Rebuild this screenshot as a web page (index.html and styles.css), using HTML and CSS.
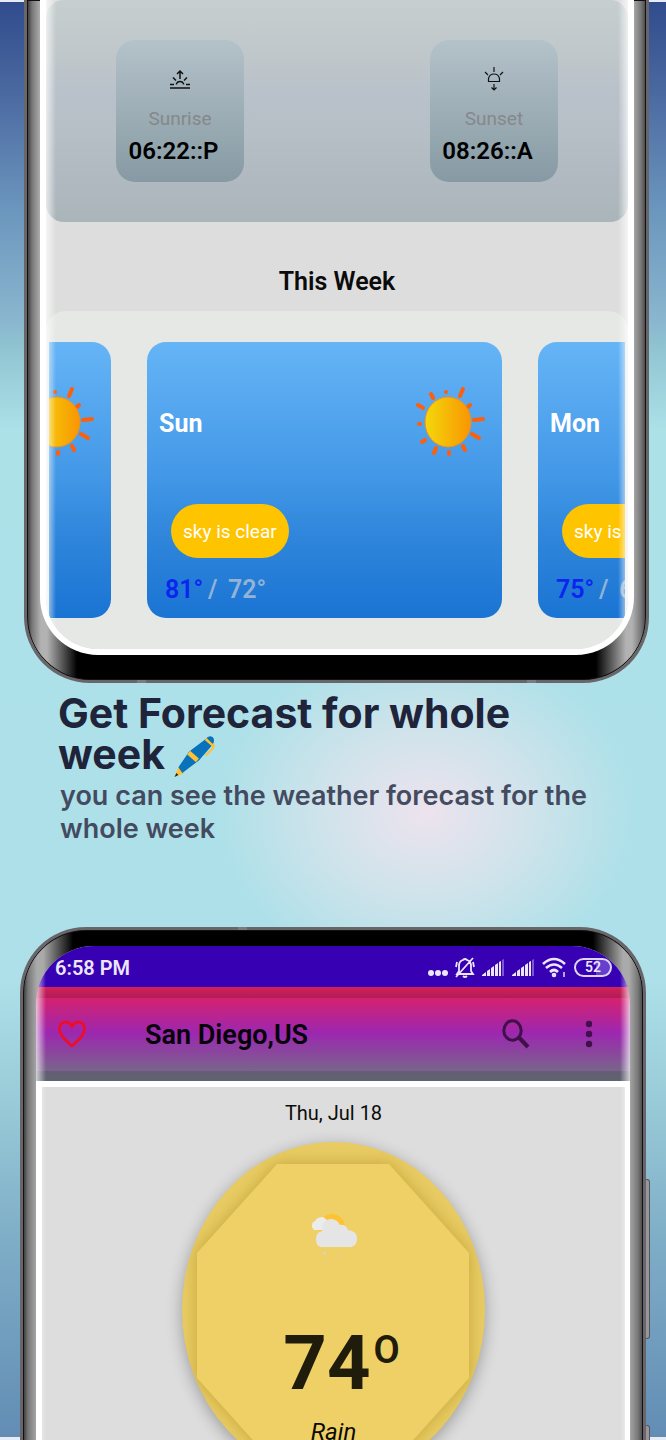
FILE: index.html
```
<!DOCTYPE html>
<html lang="en">
<head>
<meta charset="utf-8">
<meta name="viewport" content="width=device-width, initial-scale=1">
<title>Weather forecast</title>
<link rel="stylesheet" href="styles.css">
</head>
<body>
<svg class="defs" width="0" height="0" aria-hidden="true">
  <defs>
    <linearGradient id="sun-fill" x1="0" x2="1" y1="0" y2="0"><stop offset="0" stop-color="#f4d80a"/><stop offset="1" stop-color="#f99503"/></linearGradient>
    <symbol id="sun" viewBox="0 0 70 70">
      <g stroke="#ff5f0a" stroke-width="4" stroke-linecap="round">
        <path d="M44 9l3-7M52 20l2-2M58 33l9-1M56 47l7 4M47 59l2 4M33 65v2M20 61l-2 5M9 53l-3 2M3 37h1M7 21l-5-3M17 11l-2-4M30 5v0"/>
      </g>
      <ellipse cx="32" cy="35" rx="23" ry="25" fill="url(#sun-fill)" stroke="#ee9220" stroke-width="1"/>
    </symbol>
    <symbol id="signal" viewBox="0 0 23 19">
      <path d="M0 18v-1l4-3v4zM5 18v-5l3-2v7zM9 18v-8l3-2v10zM13 18V7l3-2v13zM17 4l2-1v15h-2z" fill="#ece6fa"/>
      <path d="M20 2l2-1v17h-2z" fill="#7a58d4"/>
    </symbol>
  </defs>
</svg>
<main class="showcase">
  <section class="phone phone-upper" aria-label="Weekly forecast screen">
    <i class="seam seam-left"></i><i class="seam seam-right"></i>
    <div class="screen screen-upper">
      <div class="astro">
        <div class="astro-card">
          <svg class="icon-astro" viewBox="0 0 24 24" fill="none" stroke="#111" stroke-width="1.500"><path d="M2 21h20M2 17.500h4M18 17.500h4M5 10.500l3 3M19 10.500l-3 3M12 12V4M9 7l3-3 3 3M8.500 17.500v-1q1-2 3.500-2t3.500 2v1"/></svg>
          <span class="astro-label">Sunrise</span>
          <span class="astro-time">06:22::P</span>
        </div>
        <div class="astro-card">
          <svg class="icon-astro" viewBox="0 0 24 24" fill="none" stroke="#111" stroke-width="1.200"><path d="M12 0v5M3 5l3 3M21 5l-3 3M6.500 14.500v-3q1-4.500 5.500-4.500t5.500 4.500v3zM12 17v6M9.500 20.500L12 23l2.500-2.500"/></svg>
          <span class="astro-label">Sunset</span>
          <span class="astro-time">08:26::A</span>
        </div>
      </div>
      <h2 class="week-title">This Week</h2>
      <div class="week">
        <div class="track">
          <article class="day">
            <div class="day-head"><span></span><svg class="sun"><use href="#sun"/></svg></div>
          </article>
          <article class="day">
            <div class="day-head"><h3>Sun</h3><svg class="sun"><use href="#sun"/></svg></div>
            <span class="chip">sky is clear</span>
            <p class="temps"><b>81°</b> <span>/</span> <span>72°</span></p>
          </article>
          <article class="day">
            <div class="day-head"><h3>Mon</h3></div>
            <span class="chip">sky is clear</span>
            <p class="temps"><b>75°</b> <span>/</span> <span>6</span></p>
          </article>
        </div>
      </div>
    </div>
  </section>

  <header class="caption">
    <h1>Get Forecast for whole week<svg class="pen" viewBox="0 0 42 42"><path d="M0 42l4-10 6 6z" fill="#fdc133"/><path d="M0 42l2-4 2 2z" fill="#222"/><path d="M4 32L15 16 32 3q3-4 7-2 3 3 0 8L25 25 8 38z" fill="#0872ba"/><path d="M16 15l-3 4 9 8 3-4zM33 2l8 8-1 2-9-8z" fill="#fdc133"/><path d="M39 8q2 2 0 5l-7 7" fill="none" stroke="#fdc133" stroke-width="2"/></svg></h1>
    <p>you can see the weather forecast for the whole week</p>
  </header>

  <section class="phone phone-lower" aria-label="Current weather screen">
    <i class="seam seam-top"></i><i class="key key-power"></i><i class="key key-volume"></i>
    <div class="screen screen-lower">
      <div class="status">
        <span>6:58 PM</span>
        <div class="status-icons">
          <svg width="20" height="20" viewBox="0 0 20 20" fill="#ece6fa"><circle cx="3" cy="15" r="3"/><circle cx="10" cy="15" r="3"/><circle cx="17" cy="15" r="3"/></svg>
          <svg width="20" height="21" viewBox="0 0 20 21" fill="none" stroke="#ece6fa" stroke-width="1.800"><path d="M2 17h16l-2-3V9q0-5-4-6-2-2-4 0-4 1-4 6v5zM8 19q2 2 4 0M1 20L18 1M2 5L1 10M18 5l1 5"/></svg>
          <svg width="23" height="19"><use href="#signal"/></svg>
          <svg width="23" height="19"><use href="#signal"/></svg>
          <svg width="25" height="21" viewBox="0 0 25 21" fill="none" stroke="#ece6fa" stroke-width="2.600"><path d="M1 7q11-10 22 0M4 11q8-7 16 0M8 15q4-4 8 0"/><circle cx="12" cy="18" r="1"/><path d="M22 15v5" stroke="#b6a2ea" stroke-width="2"/></svg>
          <span class="battery">52</span>
        </div>
      </div>
      <div class="appbar">
        <button class="tool" type="button" aria-label="Favourite"><svg width="28" height="28" viewBox="0 0 28 28" fill="none" stroke="#f00d24" stroke-width="2.600"><path d="M14 26C8 20 1.500 16 1.500 8.500 1.500 1 11 0 14 6.500 17 0 26.500 1 26.500 8.500 26.500 16 20 20 14 26z"/></svg></button>
        <h2>San Diego,US</h2>
        <button class="tool" type="button" aria-label="Search"><svg width="28" height="30" viewBox="0 0 28 30" fill="none" stroke="#40104a" stroke-width="3"><ellipse cx="10.500" cy="11.500" rx="8.700" ry="9.700"/><path d="M17 18.500l9 9.500" stroke-width="4"/></svg></button>
        <button class="tool" type="button" aria-label="More options"><svg width="8" height="28" viewBox="0 0 8 28" fill="#40104a"><circle cx="4" cy="4" r="3.200"/><circle cx="4" cy="14" r="3.200"/><circle cx="4" cy="24" r="3.200"/></svg></button>
      </div>
      <div class="sheet">
        <p class="date">Thu, Jul 18</p>
        <div class="dial">
          <svg class="facet" viewBox="0 0 303 336" preserveAspectRatio="none"><path d="M95 22h112l80 89v125l-80 89H95l-80-89V111z" fill="#eed067"/></svg>
          <svg class="rain" width="46" height="50" viewBox="0 0 46 50"><circle cx="21" cy="14" r="13" fill="#ffc233"/><path d="M3 17q-5-6 1-9 2-4 8-4l4 3v5l-5 5z" fill="#ececec"/><path d="M10 34q-5-1-5-8 0-7 6-8 0-12 9-12 6 0 9 6 6-1 8 5 9 1 9 8 0 8-6 9z" fill="#e5e5e5"/><path d="M13 38l2 1-1 3-2-1zM29 42l2 1-1 2zM14 47h2l-1 2z" fill="#c9dbc9"/></svg>
          <p class="degrees">74<sup>O</sup></p>
          <p class="condition">Rain</p>
        </div>
      </div>
    </div>
  </section>
</main>
</body>
</html>
```
FILE: styles.css
```
* { box-sizing: border-box; }
body, h1, h2, h3, p { margin: 0; }
body { font-family: Roboto, "Liberation Sans", sans-serif; color: #0b0b0b; }
.defs { position: absolute; }
svg { flex: none; }

.showcase {
  display: flex;
  flex-direction: column;
  height: 100vh;
  overflow: hidden;
  background:
    linear-gradient(#e6ebf5, #e6ebf5) top / 100% 2px no-repeat,
    linear-gradient(#e6ebf5, #e6ebf5) bottom / 100% 3px no-repeat,
    radial-gradient(ellipse 210px 170px at 64% 813px, #ede3ee 0%, #cfe3eb 50%, rgba(173, 224, 232, 0) 100%),
    linear-gradient(#2f4b8c 0, #4a68a0 90px, #6b96bd 210px, #8ab6cf 320px, #8fc3d0 345px, #ade1e8 430px, #ade0e9 980px, #9acbd8 1100px, #80afc8 1230px, #628cb4 100%);
}

.phone {
  position: relative;
  flex: none;
  border: 3px solid #69666b;
  box-shadow: inset 0 0 0 1px #111;
  background-color: #909090;
}
.phone-upper {
  margin: 0 17px 0 24px;
  padding: 0 12px 25px 13px;
  border-top: 0;
  border-radius: 0 0 66px 66px;
  background-image:
    linear-gradient(to right, transparent 20px, #000 50px, #000 calc(100% - 50px), transparent calc(100% - 20px)),
    linear-gradient(to right, #333, #777 5px, #b2b2b2 14px, #b2b2b2 calc(100% - 14px), #777 calc(100% - 5px), #444);
  background-size: 100% 64px, 100% 100%;
  background-position: bottom;
  background-repeat: no-repeat;
}
.phone-lower {
  margin: 0 20px;
  padding: 16px 13px 0;
  border-bottom: 0;
  border-radius: 66px 66px 0 0;
  background-image:
    linear-gradient(to right, transparent 20px, #000 50px, #000 calc(100% - 50px), transparent calc(100% - 20px)),
    linear-gradient(to right, #333, #777 5px, #aaa 14px, #aaa calc(100% - 14px), #777 calc(100% - 5px), #444);
  background-size: 100% 44px, 100% 100%;
  background-repeat: no-repeat;
}
.seam { position: absolute; width: 9px; height: 3px; background: #7d7a80; }
.seam-left { left: 110px; bottom: -3px; }
.seam-right { right: 110px; bottom: -3px; }
.seam-top { left: 215px; top: -3px; }
.key { position: absolute; right: -7px; width: 4px; height: 160px; border-radius: 0 3px 3px 0; border: 1px solid #555; border-left: 0; background: #98959c; }
.key-power { top: 249px; }
.key-volume { top: 495px; }

.screen { position: relative; overflow: hidden; background: #ddd; }
.screen::after {
  content: "";
  position: absolute;
  inset: 0;
  pointer-events: none;
  background: linear-gradient(to right, rgba(255, 255, 255, 0.7), transparent 10px, transparent calc(100% - 10px), rgba(255, 255, 255, 0.7));
}

.screen-upper { border: 6px solid #fff; border-top: 0; border-radius: 0 0 58px 58px; }
.astro {
  display: flex;
  justify-content: space-between;
  padding: 40px 70px;
  border-radius: 18px;
  background: linear-gradient(#c6cecf, #c0c7ca 25%, #b9c2ca 40%, #b6bec6 60%, #aab5ba);
}
.astro-card {
  display: flex;
  flex-direction: column;
  align-items: center;
  width: 128px;
  height: 142px;
  padding-top: 27px;
  border-radius: 19px;
  background: linear-gradient(#b4c2ca, #a0b0b8 45%, #94a6ae 70%, #879aa4);
}
.icon-astro { width: 24px; height: 24px; }
.astro-label { margin-top: 16px; font-size: 19px; line-height: 24px; color: #85888a; }
.astro-time { margin: 5px 13px 0 0; font-size: 24px; line-height: 30px; font-weight: 600; color: #000; }
.week-title { padding: 45px 0 14px; font-size: 25px; line-height: 30px; font-weight: 600; text-align: center; }
.week { padding: 31px 3px; border-radius: 20px 20px 0 0; background: #e5e8e5; }
.track { display: flex; justify-content: center; gap: 36px; padding-right: 25px; overflow: hidden; }
.day {
  flex: none;
  width: 355px;
  height: 276px;
  padding: 45px 12px 0;
  border-radius: 19px;
  background: linear-gradient(#65b4f6, #4398e7 48%, #2f86db 70%, #1a74d3);
  color: #fff;
}
.day-head { display: flex; justify-content: space-between; align-items: flex-start; height: 70px; }
.day-head h3 { padding-top: 22px; font-size: 25px; line-height: 30px; font-weight: 700; }
.sun { width: 70px; height: 70px; margin-right: 4px; }
.chip { display: inline-block; margin: 47px 0 0 12px; padding: 16px 12px 14px; border-radius: 27px; background: #ffc400; font-size: 19px; line-height: 24px; white-space: nowrap; }
.temps { display: flex; margin: 17px 0 0 6px; font-size: 25px; line-height: 30px; font-weight: 600; color: #92b3d6; }
.temps b { width: 43px; font-weight: 600; color: #0b25f0; }
.temps span { width: 20px; }

.caption { flex: none; height: 244px; padding: 10px 56px 0 58px; font-family: Inter, "Liberation Sans", sans-serif; }
.caption h1 { font-size: 41px; line-height: 41px; font-weight: 700; color: #20243a; }
.pen { width: 42px; height: 41px; margin-left: 9px; vertical-align: -8px; }
.caption p { padding: 2px 0 0 2px; font-size: 27px; line-height: 33px; font-weight: 600; color: #444b60; }

.screen-lower { height: 560px; border-radius: 58px 58px 0 0; }
.status { display: flex; justify-content: space-between; align-items: center; height: 41px; padding: 2px 18px 0 19px; background: #3800b3; color: #ece6fa; font-size: 20px; font-weight: 600; }
.status-icons { display: flex; align-items: center; gap: 7px; }
.battery { width: 38px; border: 2px solid #ded4f6; border-radius: 10px; font-size: 14px; line-height: 15px; text-align: center; background: linear-gradient(to right, transparent 60%, #6440cc 60%); }
.appbar {
  display: flex;
  align-items: center;
  height: 94px;
  padding: 0 37px 0 22px;
  background: linear-gradient(#d42058 0, #b01c58 11px, #d6216f 11px, #9c27b0 46px, #79648b 84px, #655c73 84px, #5e6470 94px);
}
.appbar h2 { flex: 1; padding: 2px 0 0 59px; font-size: 27px; line-height: 34px; font-weight: 600; color: #050008; }
.tool { display: flex; padding: 0; border: 0; background: none; }
.tool + .tool { margin-left: 55px; }
.sheet { display: flex; flex-direction: column; align-items: center; border: solid #fff; border-width: 6px 5px 0 6px; height: 100%; padding-top: 14px; }
.date { font-size: 20px; line-height: 24px; }
.dial {
  position: relative;
  display: flex;
  flex-direction: column;
  align-items: center;
  flex: none;
  width: 303px;
  height: 336px;
  margin-top: 17px;
  padding-top: 71px;
  border-radius: 50%;
  overflow: hidden;
  background: #e8cb62;
  box-shadow: 0 4px 16px rgba(0, 0, 0, 0.3);
  color: #1f1c0c;
}
.facet { position: absolute; inset: 0; width: 100%; height: 100%; filter: drop-shadow(0 0 8px rgba(140, 110, 0, 0.4)); }
.rain, .degrees, .condition { position: relative; }
.degrees { display: flex; align-items: flex-start; margin: 56px 0 0 16px; font-size: 76px; line-height: 88px; font-weight: 700; }
.degrees sup { margin: 9px 0 0 3px; font-size: 38px; line-height: 44px; font-weight: 600; }
.condition { margin-top: 11px; font-size: 24px; line-height: 28px; font-style: italic; color: #0b0b05; }
```
